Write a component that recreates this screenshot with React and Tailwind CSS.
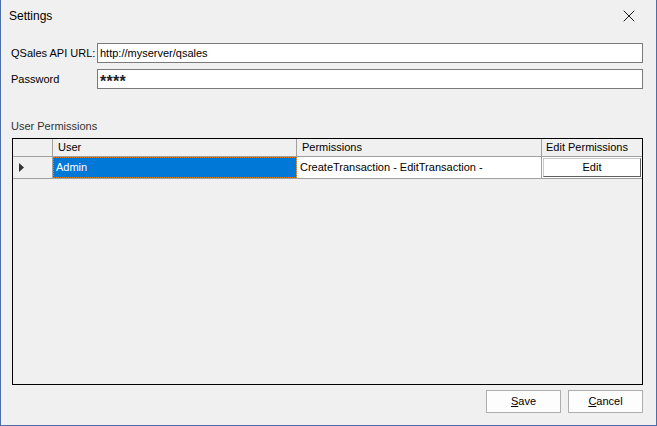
import { X } from 'lucide-react';

function Field({ label, value, isPassword }) {
  return (
    <div className="flex items-center h-[20px]">
      <span className="w-[96px] shrink-0 pl-[10px] whitespace-nowrap text-black">{label}</span>
      <div className="flex-1 h-[20px] bg-white border border-[#7a7a7a] flex items-center px-[2px]">
        {isPassword ? (
          <span className="text-[#222] text-[16px] font-bold leading-none pt-[6px] tracking-[0.3px]">{value}</span>
        ) : (
          <span>{value}</span>
        )}
      </div>
    </div>
  );
}

export default function App() {
  return (
    <div
      className="w-[657px] h-[426px] bg-[#f0f0f0] border-l border-r border-b border-[#4d6fa6] flex flex-col text-[11px] text-black"
      style={{ fontFamily: '"Liberation Sans", Arial, sans-serif' }}
    >
      {/* title bar */}
      <div className="h-[32px] flex items-center justify-between pl-[8px] pr-[17px]">
        <span className="text-[12px]">Settings</span>
        <X size={20} strokeWidth={1.2} className="text-[#1a1a1a]" />
      </div>

      <div className="flex flex-col gap-[6px] pt-[11px] pr-[13px]">
        <Field label="QSales API URL:" value="http://myserver/qsales" />
        <Field label="Password" value="****" isPassword />
      </div>

      <div className="pl-[10px] pt-[29px] pb-[3px] text-[#333]">User Permissions</div>

      {/* grid */}
      <div className="ml-[11px] mr-[13px] h-[247px] border border-black bg-[#f0f0f0] flex flex-col">
        <div className="flex h-[18px] border-b border-[#a0a0a0]">
          <div className="w-[40px] border-r border-[#a0a0a0]" />
          <div className="w-[244px] border-r border-[#a0a0a0] pl-[5px] flex items-center">User</div>
          <div className="w-[245px] border-r border-[#a0a0a0] pl-[5px] flex items-center">Permissions</div>
          <div className="flex-1 pl-[4px] flex items-center">Edit Permissions</div>
        </div>
        <div className="flex h-[22px] border-b border-[#a0a0a0]">
          <div className="w-[40px] border-r border-[#a0a0a0] flex items-center pl-[6px]">
            <svg width="5" height="9" viewBox="0 0 5 9">
              <path d="M0 0 L5 4.5 L0 9 Z" fill="#333" />
            </svg>
          </div>
          <div className="w-[244px] border-r border-[#a0a0a0] bg-[#0078d7] text-white flex items-center pl-[3px] outline-1 outline-dotted outline-[#e07a00] -outline-offset-1">
            Admin
          </div>
          <div className="w-[245px] border-r border-[#a0a0a0] bg-white flex items-center pl-[3px]">
            CreateTransaction - EditTransaction -
          </div>
          <div className="flex-1 bg-white p-[1px] flex">
            <div className="flex-1 bg-white border border-[#c8c8c8] border-r-[#606060] border-b-[#606060] flex items-center justify-center">
              Edit
            </div>
          </div>
        </div>
      </div>

      {/* buttons */}
      <div className="flex justify-end gap-[7px] pt-[5px] pr-[13px]">
        <button className="w-[75px] h-[23px] bg-[#fdfdfd] border border-[#adadad]">
          <span className="underline">S</span>ave
        </button>
        <button className="w-[75px] h-[23px] bg-[#fdfdfd] border border-[#adadad]">
          <span className="underline">C</span>ancel
        </button>
      </div>
    </div>
  );
}
